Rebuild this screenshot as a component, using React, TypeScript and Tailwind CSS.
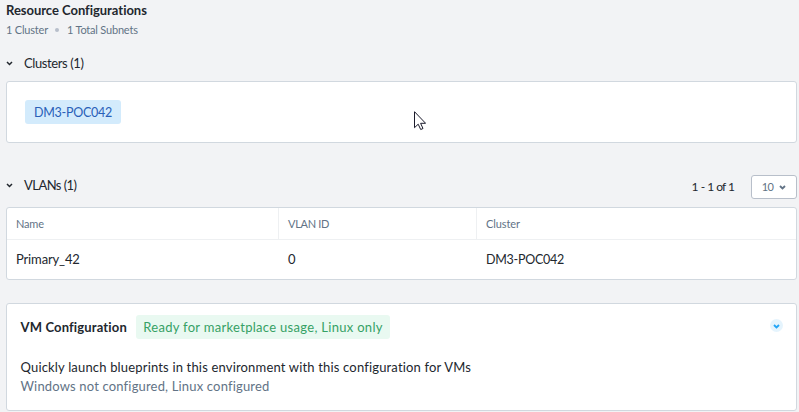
import React from 'react';

function Chevron({ className, width = 2.2 }: { className: string; width?: number }) {
  return (
    <svg viewBox="0 0 8 6" fill="none" stroke="currentColor" strokeWidth={width} className={className}>
      <path d="M1 1.2 4 4.2 7 1.2" />
    </svg>
  );
}

function SectionTitle({ children }: { children: React.ReactNode }) {
  return (
    <div className="flex items-center whitespace-nowrap text-[13px] leading-4 text-[#22272e]">
      <Chevron className="mr-[11px] mt-px h-[5px] w-[7px]" width={1.8} />
      {children}
    </div>
  );
}

const columns = [
  { title: 'Name', value: 'Primary_42', titleTracking: 'tracking-[-0.2px]', tracking: 'tracking-[-0.15px]' },
  { title: 'VLAN ID', value: '0', titleTracking: 'tracking-[-0.3px]', tracking: '' },
  { title: 'Cluster', value: 'DM3-POC042', titleTracking: 'tracking-[-0.1px]', tracking: 'pt-0.5 text-[12.5px] tracking-[-0.27px]' },
];

export default function App() {
  return (
    <main className="flex h-[412px] w-[799px] flex-col overflow-hidden bg-[#f2f3f5] pl-1.5 pr-0.5 font-['Lato','Liberation_Sans',sans-serif] text-[13px] text-[#22272e]">
      <h1 className="mt-0.5 whitespace-nowrap text-[13px] font-bold leading-4 tracking-[-0.03px]">Resource Configurations</h1>
      <div className="mt-1 flex h-4 items-center whitespace-nowrap text-[11px] leading-4 tracking-[-0.2px] text-[#627386]">
        <span>1 Cluster</span>
        <i className="ml-[7px] mr-2 size-1 rounded-full bg-[#b8bfca]" />
        <span>1 Total Subnets</span>
      </div>

      <div className="mt-[17px]">
        <SectionTitle><span className="tracking-[-0.4px]">Clusters (1)</span></SectionTitle>
      </div>
      <section className="relative mt-[10px] h-[62px] shrink-0 rounded-[3px] border border-[#d1d8df] bg-white pl-[18px] pt-[18px]">
        <span className="flex h-6 w-24 items-center justify-center rounded-[3px] bg-[#d3ebfc] pt-0.5 text-[12.5px] tracking-[-0.27px] text-[#2960b8]">
          DM3-POC042
        </span>
        <svg viewBox="0 0 12 20" className="absolute left-[407px] top-[29px] h-5 w-3">
          <path
            d="M.5.7v16l3.7-3.5 2.5 5.3 2.3-1-2.4-5.2h5Z"
            fill="white"
            stroke="#1b1b2b"
          />
        </svg>
      </section>

      <div className="mt-8 flex h-6 items-center justify-between">
        <div className="-mt-1"><SectionTitle><span className="tracking-[-0.55px]">VLANs (1)</span></SectionTitle></div>
        <div className="flex items-center">
          <span className="mr-[17px] text-[12px] tracking-[-0.95px] [word-spacing:0.9px]">1 - 1 of 1</span>
          <button className="flex h-6 w-[46px] items-center justify-center gap-1.5 rounded-[3px] border border-[#b8bfca] bg-white text-[11px] tracking-[-0.6px] text-[#627386]">
            10
            <Chevron className="h-[5px] w-[7px]" />
          </button>
        </div>
      </div>

      <section className="mt-2 grid h-[73px] shrink-0 grid-cols-[272px_198px_1fr] grid-rows-[32px_1fr] overflow-hidden rounded-[3px] border border-[#d1d8df] bg-white">
        {columns.map((column, index) => (
          <div
            key={column.title}
            className={`flex items-center border-b border-[#eef0f2] pl-[9px] pt-0.5 text-[11px] text-[#627386] ${index < 2 ? 'border-r' : ''}`}
          >
            <span className={column.titleTracking}>{column.title}</span>
          </div>
        ))}
        {columns.map((column) => (
          <div key={column.title} className="flex items-center pl-[9px]">
            <span className={column.tracking}>{column.value}</span>
          </div>
        ))}
      </section>

      <section className="mt-[23px] h-[108px] shrink-0 rounded-[3px] border border-[#d1d8df] bg-white pl-[13.5px] pr-[13px] pt-[11px]">
        <div className="flex h-6 items-center whitespace-nowrap">
          <h2 className="w-[115.5px] pt-px text-[13px] font-bold tracking-[0.15px]">VM Configuration</h2>
          <span className="flex h-6 w-[254px] items-center justify-center rounded-[3px] bg-[#e9f9f1] pt-px tracking-[0.3px] text-[#36a165]">
            Ready for marketplace usage, Linux only
          </span>
          <span className="mb-[3px] ml-auto flex size-[13px] items-center justify-center rounded-full bg-[#e5f4fd] text-[#22a5f7]">
            <Chevron className="mt-px h-[5px] w-[7px]" />
          </span>
        </div>
        <p className="mt-[19px] whitespace-nowrap leading-[19px] tracking-[0.17px]">
          Quickly launch blueprints in this environment with this configuration for VMs
        </p>
        <p className="whitespace-nowrap leading-[19px] tracking-[0.17px] text-[#627386]">
          Windows not configured, Linux configured
        </p>
      </section>
    </main>
  );
}
